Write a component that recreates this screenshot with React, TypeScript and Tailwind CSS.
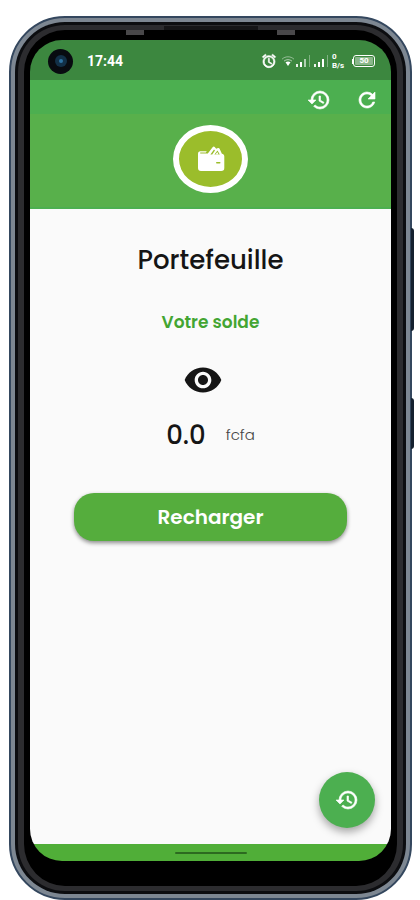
import React, { useState } from "react";
import { MdAlarm, MdHistory, MdRefresh, MdVisibility } from "react-icons/md";

// slightly heavier icons, without outlining their empty 24px box
const boldIcon = "h-6 w-6 stroke-[0.6] [&>path[fill=none]]:stroke-0";

const Signal: React.FC<{ weak?: boolean }> = ({ weak }) => (
  <svg viewBox="0 0 18 14" className="h-[14px] w-[18px]" fill="#fff">
    <rect x="1" y="10" width="2" height="3" opacity="0.9" />
    <rect x="5" y="8" width="2" height="5" />
    <rect x="9" y="5" width="2" height="8" opacity={weak ? 0.6 : 1} />
    <rect x="14" y="1" width="1" height="12" opacity="0.35" />
  </svg>
);

const Wifi: React.FC = () => (
  <svg viewBox="0 0 14 12" className="h-3 w-[14px]" fill="none" stroke="#fff">
    <path d="M1 4.2C4.4 1 9.6 1 13 4.2" opacity="0.45" />
    <path d="M3 6.2C5.2 4.2 8.8 4.2 11 6.2" opacity="0.6" />
    <path d="M4.5 7.3C6 6.2 8 6.2 9.5 7.3L7 11Z" fill="#fff" stroke="none" />
  </svg>
);

const Wallet: React.FC = () => (
  <svg viewBox="0 0 28 26" className="h-[26px] w-7" fill="#fff">
    <path d="M1 8C1 6.2 1.8 5.2 3.4 5.2H9.8L8.8 6.6H3.2V7.6H10.8L15.8 1.1C16.4.3 17.2.4 17.7 1L19.2 2.7L21 2.1C21.7 1.9 22.2 2.2 22.6 2.8L24.9 7.8C26.6 8.1 27.3 9 27.3 10.6V22C27.3 24.2 26.3 25 24.2 25H4C2 25 1 24 1 22Z" />
    <path
      d="M13.4 8.4L17 3.6L18 4.6L15.2 8.4ZM17.4 8.4L20.5 4.6L22.8 8.4Z"
      fill="#9bbd2b"
    />
    <path d="M18.4 8.4L20.3 6L21.6 8.4Z" />
    <rect x="19" y="16" width="4.5" height="1.6" rx="0.8" fill="#9bbd2b" />
  </svg>
);

const StatusBar: React.FC = () => (
  <div className="flex h-10 items-center bg-[#3c873f] pl-[18px] pr-4 pt-[2px] text-white">
    <div className="flex h-[25px] w-[25px] items-center justify-center rounded-full bg-[#080b10]">
      <div className="flex h-3 w-3 items-center justify-center rounded-full bg-[#123047]">
        <div className="h-1 w-1 rounded-full bg-[#2d73a3]" />
      </div>
    </div>
    <span className="ml-[14px] font-['Roboto',sans-serif] text-sm font-bold">
      17:44
    </span>
    <div className="ml-auto flex items-center">
      <MdAlarm className="mr-1 h-4 w-4 stroke-1 [&>path[fill=none]]:stroke-0" />
      <Wifi />
      <Signal weak />
      <Signal />
      <div className="ml-px flex w-4 flex-col font-['Roboto',sans-serif] text-[8px] font-bold leading-[9px]">
        <span>0</span>
        <span>B/s</span>
      </div>
      <div className="ml-1 h-[5px] w-px bg-white" />
      <div className="flex h-3 w-[22px] items-center justify-center rounded-[3px] border border-white">
        <span className="flex h-2 w-[18px] items-center justify-center rounded-[1px] bg-white/40 font-['Roboto',sans-serif] text-[8px] font-bold leading-[8px]">
          50
        </span>
      </div>
    </div>
  </div>
);

const Header: React.FC<{ onRefresh: () => void }> = ({ onRefresh }) => (
  <header className="bg-[#58b04b] text-white">
    <div className="flex h-[34px] items-center justify-end gap-6 bg-[#4caf50] pr-3 pt-[6px]">
      <button type="button" aria-label="Historique">
        <MdHistory className={boldIcon} />
      </button>
      <button type="button" aria-label="Actualiser" onClick={onRefresh}>
        <MdRefresh className={boldIcon} />
      </button>
    </div>
    <div className="flex h-[95px] justify-center border-b-2 border-[#4caf50] pt-[11px]">
      <div className="flex h-[68px] w-[75px] items-center justify-center rounded-[50%] border-[6px] border-white bg-[#9bbd2b]">
        <Wallet />
      </div>
    </div>
  </header>
);

const Balance: React.FC = () => {
  const [visible, setVisible] = useState(true);

  return (
    <main className="relative flex flex-1 flex-col items-center bg-[#fafafa] px-11 pt-[33px] text-[#151515]">
      <h1 className="text-[26px] font-medium leading-9">Portefeuille</h1>
      <h2 className="mt-8 text-[17px] font-semibold leading-6 text-[#43a532]">
        Votre solde
      </h2>
      <button
        type="button"
        aria-label="Afficher le solde"
        className="mr-4 mt-[26px]"
        onClick={() => setVisible(!visible)}
      >
        <MdVisibility className="h-10 w-10" />
      </button>
      <p className="mt-[17px] flex items-center gap-5">
        <span className="text-[26px] font-medium leading-9">
          {visible ? "0.0" : "•••"}
        </span>
        <span className="text-[15px] font-light text-[#444]">fcfa</span>
      </p>
      <button
        type="button"
        className="mt-10 h-12 w-full rounded-[20px] bg-[#55ad3d] text-xl font-semibold text-white shadow-[0_2px_4px_rgba(0,0,0,0.45)]"
      >
        Recharger
      </button>
      <button
        type="button"
        aria-label="Historique des recharges"
        className="absolute bottom-4 right-4 flex h-14 w-14 items-center justify-center rounded-full bg-[#4caf50] text-white shadow-[0_4px_8px_rgba(0,0,0,0.35)]"
      >
        <MdHistory className={boldIcon} />
      </button>
    </main>
  );
};

export default function App() {
  const [refreshKey, setRefreshKey] = useState(0);

  return (
    <div className="flex min-h-screen flex-col bg-white pl-[9px] pr-2 pt-4 font-['Poppins','Inter',sans-serif]">
      <div className="relative flex flex-1 flex-col rounded-[56px] border-2 border-[#34475e] bg-[#7d8792] p-1">
        {/* side keys */}
        <div className="absolute -right-1 top-[210px] h-[103px] w-[3px] rounded-r-sm bg-[#14202f]" />
        <div className="absolute -right-1 top-[380px] h-[51px] w-[3px] rounded-r-sm bg-[#14202f]" />
        <div className="flex flex-1 flex-col rounded-[50px] bg-[#0c0d10] p-[3px]">
          <div className="relative flex flex-1 flex-col rounded-[47px] border-x-[6px] border-y-[5px] border-[#2c2c2f] bg-black pb-[25px] pt-[10px]">
            {/* speaker and antenna bands */}
            <div className="absolute left-1/2 -top-1 h-1 w-[94px] -translate-x-1/2 bg-[#151517]" />
            <div className="absolute left-[102px] top-0 h-[5px] w-[18px] bg-[#49484a]" />
            <div className="absolute right-[102px] top-0 h-[5px] w-[18px] bg-[#49484a]" />
            <div className="mx-[6px] flex flex-1 flex-col overflow-hidden rounded-[32px]">
              <StatusBar />
              <Header onRefresh={() => setRefreshKey(refreshKey + 1)} />
              <Balance key={refreshKey} />
              <div className="flex h-[17px] items-center justify-center bg-[#50ae38]">
                <div className="h-[2px] w-[72px] rounded-full bg-[#2c6a20]" />
              </div>
            </div>
          </div>
        </div>
      </div>
    </div>
  );
}
